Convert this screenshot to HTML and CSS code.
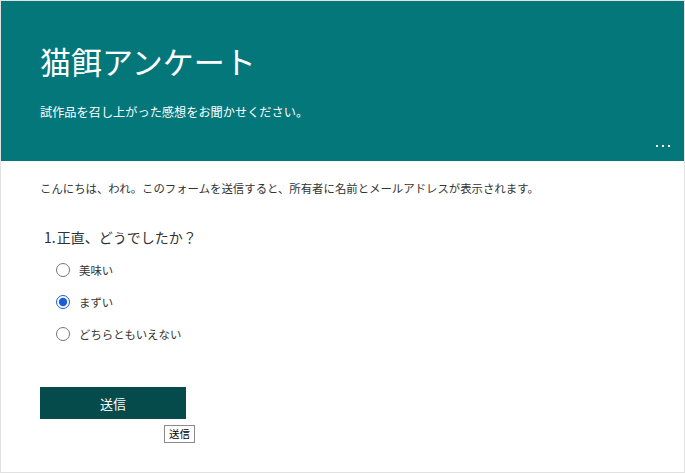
FILE: index.html
```html
<!DOCTYPE html>
<html lang="ja">
<head>
    <meta charset="UTF-8">
    <title>猫餌アンケート</title>
    <link rel="stylesheet" href="styles.css">
</head>
<body>
    <div class="page">
        <div class="form-header">
            <h1 class="form-title">猫餌アンケート</h1>
            <p class="form-subtitle">試作品を召し上がった感想をお聞かせください。</p>
            <div class="header-tools">
                <span class="more-dots"><i></i><i></i><i></i></span>
            </div>
        </div>

        <div class="form-body">
            <p class="notice">こんにちは、われ。このフォームを送信すると、所有者に名前とメールアドレスが表示されます。</p>

            <div class="question">
                <div class="question-title"><span class="q-num">1.</span>正直、どうでしたか？</div>
                <label class="choice"><input type="radio" name="q1"><span>美味い</span></label>
                <label class="choice"><input type="radio" name="q1" checked><span>まずい</span></label>
                <label class="choice"><input type="radio" name="q1"><span>どちらともいえない</span></label>
            </div>

            <div class="submit-wrap">
                <button class="submit-btn" title="送信">送信</button>
                <span class="tooltip">送信</span>
            </div>
        </div>
    </div>
</body>
</html>
```

FILE: styles.css
```css
* {
    box-sizing: border-box;
}
html, body {
    margin: 0;
    padding: 0;
}
body {
    font-family: "Noto Sans CJK JP", "Noto Sans", sans-serif;
    background: #fff;
    color: #323130;
}
.page {
    width: 685px;
    height: 473px;
    border: 1px solid #e1e1e1;
    display: flex;
    flex-direction: column;
}
.form-header {
    height: 160px;
    background: #04777b; /* Forms teal */
    color: #fff;
    padding: 39px 0 0 39px;
    display: flex;
    flex-direction: column;
}
.form-title {
    margin: 0;
    font-size: 31px;
    font-weight: 400;
    line-height: 42px;
}
.form-subtitle {
    margin: 21px 0 0;
    font-size: 12.2px;
    line-height: 18px;
}
.header-tools {
    margin-top: auto;
    display: flex;
    justify-content: flex-end;
    padding: 0 14px 14px 0;
}
.more-dots {
    display: flex;
    gap: 4px;
}
.more-dots i {
    display: block;
    width: 2px;
    height: 2px;
    background: #fff;
}
.form-body {
    padding: 18px 0 0 39px;
}
.notice {
    margin: 0;
    font-size: 11.4px;
    line-height: 18px;
    color: #333;
}
.question {
    margin-top: 30px;
}
.question-title {
    font-size: 14px;
    line-height: 20px;
    padding-left: 4px;
    margin-bottom: 7px;
}
.q-num {
    margin-right: 1px;
}
.choice {
    display: flex;
    align-items: center;
    height: 32px;
    padding-left: 16px;
    font-size: 11.4px;
    color: #333;
}
.choice input {
    margin: 0 9px 0 0;
    width: 14px;
    height: 14px;
    accent-color: #1a5fd8;
}
.submit-wrap {
    position: relative;
    margin-top: 37px;
    width: 146px;
}
.submit-btn {
    display: block;
    width: 146px;
    height: 32px;
    border: none;
    background: #064b4c;
    color: #fff;
    font-family: inherit;
    font-size: 13px;
}
.tooltip {
    position: absolute;
    left: 124px;
    top: 38px;
    width: 31px;
    height: 18px;
    border: 1px solid #8a8a8a;
    background: #fff;
    color: #000;
    font-size: 10.5px;
    line-height: 16px;
    text-align: center;
}
```
